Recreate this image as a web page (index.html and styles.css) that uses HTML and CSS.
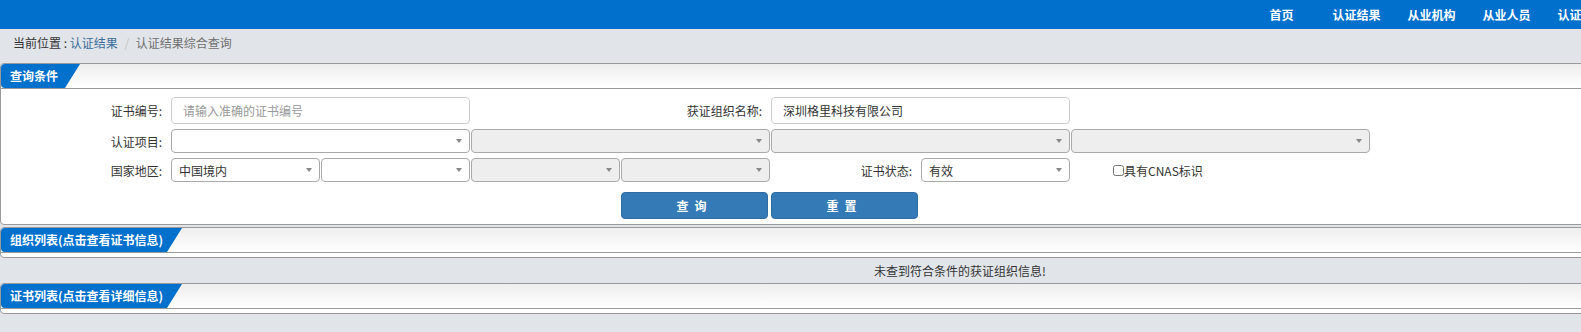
FILE: index.html
```html
<!DOCTYPE html>
<html lang="zh-CN">
<head>
    <meta charset="UTF-8">
    <title>认证结果综合查询</title>
    <link rel="stylesheet" href="styles.css">
</head>
<body>
<div class="page">
    <div class="topbar">
        <ul class="nav">
            <li>首页</li>
            <li>认证结果</li>
            <li>从业机构</li>
            <li>从业人员</li>
            <li>认证机构</li>
        </ul>
    </div>

    <div class="crumb">
        当前位置 : <a href="#">认证结果</a> <span class="sep">/</span> <span class="cur">认证结果综合查询</span>
    </div>

    <div class="panel">
        <div class="panel-head"><span class="tab">查询条件</span></div>
        <div class="panel-body">
            <div class="form">
                <label class="lbl">证书编号:</label>
                <div class="cell span2"><input class="txt" type="text" placeholder="请输入准确的证书编号"></div>
                <label class="lbl span2">获证组织名称:</label>
                <div class="cell span2"><input class="txt" type="text" value="深圳格里科技有限公司"></div>
                <div class="cell span2"></div>

                <label class="lbl">认证项目:</label>
                <div class="cell span2"><div class="sel"><select></select></div></div>
                <div class="cell span2"><div class="sel off"><select disabled></select></div></div>
                <div class="cell span2"><div class="sel off"><select disabled></select></div></div>
                <div class="cell span2"><div class="sel off"><select disabled></select></div></div>

                <label class="lbl">国家地区:</label>
                <div class="cell"><div class="sel"><select><option>中国境内</option></select></div></div>
                <div class="cell"><div class="sel"><select></select></div></div>
                <div class="cell"><div class="sel off"><select disabled></select></div></div>
                <div class="cell"><div class="sel off"><select disabled></select></div></div>
                <label class="lbl">证书状态:</label>
                <div class="cell"><div class="sel"><select><option>有效</option></select></div></div>
                <div class="cell span2 cnas"><input type="checkbox" id="cnas"><label for="cnas">具有CNAS标识</label></div>

                <div class="btns">
                    <button class="btn">查询</button>
                    <button class="btn">重置</button>
                </div>
            </div>
        </div>
    </div>

    <div class="panel">
        <div class="panel-head"><span class="tab wide">组织列表(点击查看证书信息)</span></div>
        <div class="panel-body empty"></div>
    </div>

    <div class="msg">未查到符合条件的获证组织信息!</div>

    <div class="panel">
        <div class="panel-head"><span class="tab wide">证书列表(点击查看详细信息)</span></div>
        <div class="panel-body empty"></div>
    </div>
</div>
</body>
</html>
```

FILE: styles.css
```css
html { overflow: hidden; }
body {
    margin: 0;
    background: #e1e5e9;
    font-family: "Noto Sans CJK SC", "Liberation Sans", sans-serif;
    font-size: 12px;
    color: #333;
}
.page { width: 1920px; }

.topbar { height: 29px; background: #0070cd; }
.nav {
    list-style: none;
    margin: 0;
    padding: 0 0 0 1244px;
    display: flex;
}
.nav li {
    width: 75px;
    text-align: center;
    line-height: 29px;
    color: #fff;
    font-weight: bold;
}

.crumb {
    height: 28px;
    padding: 6px 13px 0;
    line-height: 16px;
}
.crumb a { color: #3a6d9c; text-decoration: none; }
.crumb .sep { color: #c4c4c4; margin: 0 4px; }
.crumb .cur { color: #707070; }

.panel {
    background: #fff;
    border: 1px solid #999;
    border-radius: 4px;
    margin-bottom: 2px;
}
.panel-head {
    height: 24px;
    border-bottom: 1px solid #999;
    background: linear-gradient(#eeeeee, #ffffff);
    border-radius: 4px 4px 0 0;
}
.tab {
    display: inline-block;
    height: 24px;
    line-height: 24px;
    width: 70px;
    padding-left: 9px;
    color: #fff;
    font-weight: bold;
    background: #0070cd;
    border-radius: 4px 0 0 4px;
    clip-path: polygon(0 0, 100% 0, calc(100% - 15px) 100%, 0 100%);
}
.tab.wide { width: 172px; }

.panel-body { padding: 8px 0 5px; }
.panel-body.empty { padding: 0; height: 4px; }

.form {
    display: grid;
    grid-template-columns: 170px repeat(8, 150px);
    row-gap: 5px;
}
.lbl {
    text-align: right;
    padding-right: 9px;
    align-self: center;
}
.span2 { grid-column: span 2; }
.cell { display: flex; align-items: center; }

.txt {
    width: 299px;
    height: 27px;
    box-sizing: border-box;
    border: 1px solid #ccc;
    border-radius: 4px;
    padding: 0 11px;
    font: inherit;
    color: #333;
}
.txt::placeholder { color: #999; }

.sel {
    position: relative;
    width: calc(100% - 1px);
    height: 24px;
    box-sizing: border-box;
    border: 1px solid #aaa;
    border-radius: 4px;
    background: #fff;
}
.sel.off { background: #eee; }
.sel select {
    appearance: none;
    -webkit-appearance: none;
    width: 100%;
    height: 100%;
    border: 0;
    background: transparent;
    padding: 0 0 0 7px;
    font: inherit;
    color: #333;
    outline: none;
}
.sel::after {
    content: "";
    position: absolute;
    right: 7px;
    top: 9px;
    border-left: 3px solid transparent;
    border-right: 3px solid transparent;
    border-top: 4px solid #888;
}
.cnas { padding-left: 42px; }
.cnas input { margin: 0; width: 11px; height: 11px; }

.btns {
    grid-column: 5 / span 4;
    display: flex;
    gap: 3px;
    margin-top: 5px;
}
.btn {
    width: 147px;
    height: 27px;
    background: #337ab7;
    border: 1px solid #2e6da4;
    border-radius: 4px;
    color: #fff;
    font: bold 12px "Noto Sans CJK SC", sans-serif;
    letter-spacing: 6px;
    padding-left: 6px;
}

.msg {
    height: 22px;
    line-height: 22px;
    text-align: center;
    margin-bottom: 1px;
}
```
